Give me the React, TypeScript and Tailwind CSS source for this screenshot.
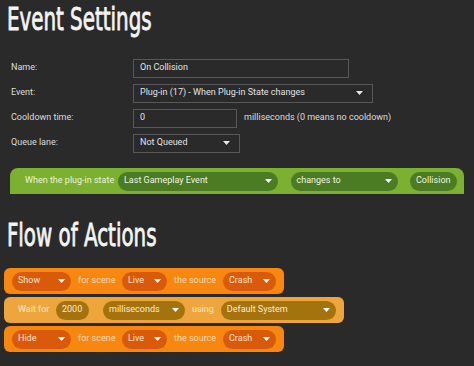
import React from "react";

const Caret = ({ color = "#ffffff" }: { color?: string }) => (
  <svg width="7" height="4" viewBox="0 0 7 4" className="shrink-0">
    <path d="M0 0 H7 L3.5 4 Z" fill={color} />
  </svg>
);

interface PillProps {
  label: string;
  width?: string;
  bg: string;
  text: string;
  caret?: boolean;
}

const Pill: React.FC<PillProps> = ({ label, width, bg, text, caret = true }) => (
  <div
    className={`h-[19px] shrink-0 rounded-full flex items-center justify-between gap-2 px-[6px] ${bg} ${text} ${width ?? ""}`}
  >
    <span className="whitespace-nowrap">{label}</span>
    {caret && <Caret />}
  </div>
);

const FormRow = ({ label, children }: { label: string; children: React.ReactNode }) => (
  <div className="flex items-center h-[18px]">
    <div className="w-[122px] text-[#dcdcdc]">{label}</div>
    {children}
  </div>
);

const Box = ({ value, width, caret }: { value: string; width: string; caret?: boolean }) => (
  <div
    className={`h-[19px] border border-[#585858] bg-[#2a2a2a] flex items-center justify-between pl-[6px] pr-[9px] text-[#e2e2e2] ${width}`}
  >
    <span>{value}</span>
    {caret && <Caret color="#e8e8e8" />}
  </div>
);

const ActionBlock = ({ kind, children }: { kind: "orange" | "wait"; children: React.ReactNode }) => (
  <div
    className={`w-fit h-[26px] rounded-md flex items-center gap-[7px] pl-[8px] pr-[8px] ${
      kind === "orange" ? "bg-[#f7870f] text-[#ffdcc0]" : "bg-[#eea63c] text-[#fdebc8]"
    }`}
  >
    {children}
  </div>
);

const headingFont = { fontFamily: "'DejaVu Sans Condensed', 'DejaVu Sans', sans-serif" };

export default function App() {
  const orangePill = "bg-[#d95a0b]";
  const orangeText = "text-[#ffe3cf]";
  const waitPill = "bg-[#a5730d]";
  const waitText = "text-[#fcebd0]";

  return (
    <div
      className="w-[474px] h-[366px] bg-[#2a2a2a] overflow-hidden text-[9px]"
      style={{ fontFamily: "Roboto, 'Liberation Sans', sans-serif" }}
    >
      <h1
        className="pl-[10px] text-[32px] leading-[38px] text-[#f4f4f4] [-webkit-text-stroke:0.8px_#f4f4f4] whitespace-nowrap origin-left scale-x-[0.69]"
        style={headingFont}
      >
        Event Settings
      </h1>

      <div className="flex flex-col gap-[7px] pl-[11px] mt-[21px]">
        <FormRow label="Name:">
          <Box value="On Collision" width="w-[216px]" />
        </FormRow>
        <FormRow label="Event:">
          <Box value="Plug-in (17) - When Plug-in State changes" width="w-[240px]" caret />
        </FormRow>
        <FormRow label="Cooldown time:">
          <Box value="0" width="w-[104px]" />
          <span className="ml-[7px] text-[#dcdcdc]">milliseconds (0 means no cooldown)</span>
        </FormRow>
        <FormRow label="Queue lane:">
          <Box value="Not Queued" width="w-[107px]" caret />
        </FormRow>
      </div>

      <div className="mx-[10px] mt-[16px] h-[26px] rounded-t-lg bg-[#7cb031] flex items-center pl-[15px] pr-[7px] text-[#eaf3dc]">
        <span className="w-[86px] mr-[7px] whitespace-nowrap">When the plug-in state</span>
        <Pill label="Last Gameplay Event" width="w-[160px]" bg="bg-[#4b7b22]" text="text-[#eef5e4]" />
        <div className="w-[15px]" />
        <Pill label="changes to" width="w-[107px]" bg="bg-[#4b7b22]" text="text-[#eef5e4]" />
        <div className="w-[15px]" />
        <Pill label="Collision" width="w-[47px]" bg="bg-[#4b7b22]" text="text-[#eef5e4]" caret={false} />
      </div>

      <h2
        className="pl-[10px] mt-[22px] text-[32px] leading-[38px] text-[#f4f4f4] [-webkit-text-stroke:0.8px_#f4f4f4] whitespace-nowrap origin-left scale-x-[0.69]"
        style={headingFont}
      >
        Flow of Actions
      </h2>

      <div className="flex flex-col gap-[3px] pl-[4px] mt-[14px]">
        <ActionBlock kind="orange">
          <Pill label="Show" width="w-[59px]" bg={orangePill} text={orangeText} />
          <span className="w-[37px] whitespace-nowrap">for scene</span>
          <Pill label="Live" width="w-[45px]" bg={orangePill} text={orangeText} />
          <span className="w-[42px] whitespace-nowrap">the source</span>
          <Pill label="Crash" width="w-[53px]" bg={orangePill} text={orangeText} />
        </ActionBlock>
        <ActionBlock kind="wait">
          <span className="ml-[6px] w-[31px] whitespace-nowrap">Wait for</span>
          <Pill label="2000" width="w-[33px]" bg={waitPill} text={waitText} caret={false} />
          <div className="ml-[7px]">
            <Pill label="milliseconds" width="w-[82px]" bg={waitPill} text={waitText} />
          </div>
          <span>using</span>
          <Pill label="Default System" width="w-[115px]" bg={waitPill} text={waitText} />
        </ActionBlock>
        <ActionBlock kind="orange">
          <Pill label="Hide" width="w-[59px]" bg={orangePill} text={orangeText} />
          <span className="w-[37px] whitespace-nowrap">for scene</span>
          <Pill label="Live" width="w-[45px]" bg={orangePill} text={orangeText} />
          <span className="w-[42px] whitespace-nowrap">the source</span>
          <Pill label="Crash" width="w-[53px]" bg={orangePill} text={orangeText} />
        </ActionBlock>
      </div>
    </div>
  );
}
